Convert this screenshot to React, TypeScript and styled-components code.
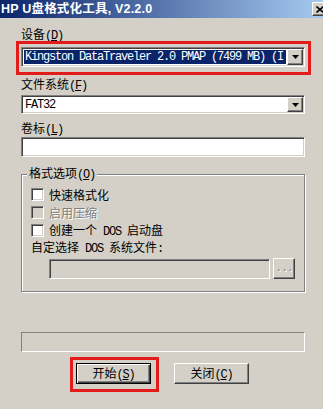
import React from "react";
import styled, { createGlobalStyle, css } from "styled-components";

const Global = createGlobalStyle`
  html, body { margin: 0; padding: 0; background: #D4D0C8; }
  body {
    font-family: "Noto Sans CJK SC", "Liberation Sans", sans-serif;
    font-size: 12px;
    color: #000;
  }
  * { box-sizing: border-box; }
`;

const sunken = css`
  border: 1px solid;
  border-color: #808080 #ffffff #ffffff #808080;
  box-shadow: inset 1px 1px 0 #404040, inset -1px -1px 0 #d4d0c8;
`;

const raised = css`
  border: 1px solid;
  border-color: #ffffff #404040 #404040 #ffffff;
  box-shadow: inset -1px -1px 0 #808080, inset 1px 1px 0 #d4d0c8;
  background: #d4d0c8;
`;

const Window = styled.div`
  width: 323px;
  height: 409px;
  background: #d4d0c8;
  overflow: hidden;
  display: flex;
  flex-direction: column;
`;

const TitleBar = styled.div`
  height: 18px;
  flex: none;
  display: flex;
  align-items: center;
  justify-content: space-between;
  background: linear-gradient(to right, #0a246a 0%, #a6caf0 100%);
  overflow: hidden;
`;

const TitleText = styled.div`
  color: #fff;
  font-family: "Liberation Sans", "Noto Sans CJK SC", sans-serif;
  font-weight: bold;
  font-size: 12.5px;
  letter-spacing: 0.2px;
  line-height: 18px;
  padding-left: 1px;
  white-space: nowrap;
`;

const CloseBox = styled.div`
  ${raised};
  width: 16px;
  height: 14px;
  margin-right: -5px;
  display: flex;
  align-items: center;
  justify-content: center;
  flex: none;
`;

const Body = styled.div`
  display: flex;
  flex-direction: column;
  padding: 0 18px 0 21px;
`;

const Label = styled.div<{ $top: number }>`
  margin-top: ${(p) => p.$top}px;
  height: 14px;
  line-height: 14px;
  white-space: nowrap;
`;

const Mono = styled.span`
  font-family: "Liberation Mono", monospace;
  font-size: 12px;
  letter-spacing: -1.2px;
  white-space: pre;
`;

const Highlight = styled.div`
  border: 3px solid #e31b1b;
  margin: 0 -6px 0 -5px;
  padding: 3px 3px 5px 2px;
`;

const Combo = styled.div<{ $h: number; $top?: number }>`
  ${sunken};
  margin-top: ${(p) => p.$top ?? 0}px;
  height: ${(p) => p.$h}px;
  background: #fff;
  display: flex;
  padding: 1px;
`;

const ComboField = styled.div<{ $selected?: boolean }>`
  flex: 1;
  min-width: 0;
  margin: 1px;
  padding-left: 1px;
  overflow: hidden;
  white-space: nowrap;
  line-height: 14px;
  display: flex;
  align-items: center;
  background: ${(p) => (p.$selected ? "#0a246a" : "#fff")};
  color: ${(p) => (p.$selected ? "#fff" : "#000")};
`;

const DropButton = styled.div`
  ${raised};
  width: 16px;
  flex: none;
  display: flex;
  align-items: center;
  justify-content: center;
`;

const TextInput = styled.div<{ $top: number }>`
  ${sunken};
  margin-top: ${(p) => p.$top}px;
  height: 20px;
  background: #fff;
`;

const Group = styled.fieldset`
  margin: 9px 0 0 0;
  min-width: 0;
  padding: 6px 9px 12px 9px;
  border: 1px solid #808080;
  box-shadow: 1px 1px 0 #fff, inset 1px 1px 0 #fff;
  display: flex;
  flex-direction: column;
`;

const Legend = styled.legend`
  margin-left: -4px;
  padding: 0 2px;
  line-height: 13px;
  background: #d4d0c8;
  white-space: nowrap;
`;

const CheckList = styled.div`
  display: flex;
  flex-direction: column;
  gap: 5px;
`;

const CheckRow = styled.label<{ $disabled?: boolean }>`
  display: flex;
  align-items: center;
  gap: 5px;
  height: 13px;
  white-space: nowrap;
  color: ${(p) => (p.$disabled ? "#808080" : "#000")};
  text-shadow: ${(p) => (p.$disabled ? "1px 1px 0 #fff" : "none")};
`;

const CheckText = styled.span`
  line-height: 13px;
`;

const CheckBox = styled.span<{ $disabled?: boolean }>`
  ${sunken};
  width: 13px;
  height: 13px;
  flex: none;
  background: ${(p) => (p.$disabled ? "#d4d0c8" : "#fff")};
`;

const SubLabel = styled.div`
  margin-top: 3px;
  height: 13px;
  line-height: 13px;
  white-space: nowrap;
`;

const FileRow = styled.div`
  display: flex;
  align-items: flex-end;
  gap: 3px;
  margin: 5px 0 0 18px;
`;

const FileInput = styled.div`
  ${sunken};
  flex: 1;
  height: 20px;
  background: #d4d0c8;
`;

const BrowseButton = styled.div`
  ${raised};
  width: 22px;
  height: 21px;
  flex: none;
  display: flex;
  align-items: flex-end;
  justify-content: center;
  padding-bottom: 4px;
  color: #808080;
  text-shadow: 1px 1px 0 #fff;
  font-family: "Liberation Mono", monospace;
  font-size: 11px;
  line-height: 11px;
  letter-spacing: -1px;
`;

const Progress = styled.div`
  margin-top: 40px;
  height: 20px;
  border: 1px solid;
  border-color: #808080 #ffffff #ffffff #808080;
`;

const ButtonRow = styled.div`
  margin-top: 5px;
  display: flex;
  align-items: flex-start;
  gap: 15px;
  padding-left: 49px;
`;

const ButtonHighlight = styled.div`
  border: 3px solid #e31b1b;
  padding: 3px 5px 5px 3px;
`;

const PushButton = styled.div<{ $default?: boolean; $top?: number; $w: number }>`
  width: ${(p) => p.$w}px;
  height: 21px;
  margin-top: ${(p) => p.$top ?? 0}px;
  display: flex;
  align-items: center;
  justify-content: center;
  white-space: nowrap;
  line-height: 14px;
  background: #d4d0c8;
  ${(p) =>
    p.$default
      ? css`
          border: 1px solid #000;
          box-shadow: inset 1px 1px 0 #fff, inset -1px -1px 0 #404040, inset -2px -2px 0 #808080;
        `
      : raised};
`;

const ButtonText = styled.span`
  line-height: 14px;
`;

const Arrow = () => (
  <svg width="7" height="4" viewBox="0 0 7 4">
    <path d="M0 0h7L3.5 4z" fill="#000" />
  </svg>
);

const XGlyph = () => (
  <svg width="8" height="7" viewBox="0 0 8 7">
    <path d="M0.5 0.5L7.5 6.5M7.5 0.5L0.5 6.5" stroke="#000" strokeWidth="1.6" />
  </svg>
);

const Key = ({ k }: { k: string }) => (
  <Mono>
    (<u>{k}</u>)
  </Mono>
);

export default function App() {
  return (
    <>
      <Global />
      <Window>
        <TitleBar>
          <TitleText>HP U盘格式化工具, V2.2.0</TitleText>
          <CloseBox>
            <XGlyph />
          </CloseBox>
        </TitleBar>
        <Body>
          <Label $top={9}>
            设备<Key k="D" />
          </Label>
          <Highlight>
            <Combo $h={20}>
              <ComboField $selected>
                <Mono>Kingston DataTraveler 2.0 PMAP (7499 MB) (I</Mono>
              </ComboField>
              <DropButton>
                <Arrow />
              </DropButton>
            </Combo>
          </Highlight>
          <Label $top={2}>
            文件系统<Key k="F" />
          </Label>
          <Combo $h={19} $top={4}>
            <ComboField>
              <Mono>FAT32</Mono>
            </ComboField>
            <DropButton>
              <Arrow />
            </DropButton>
          </Combo>
          <Label $top={7}>
            卷标<Key k="L" />
          </Label>
          <TextInput $top={2} />
          <Group>
            <Legend>
              格式选项<Key k="O" />
            </Legend>
            <CheckList>
              <CheckRow>
                <CheckBox />
                <CheckText>快速格式化</CheckText>
              </CheckRow>
              <CheckRow $disabled>
                <CheckBox $disabled />
                <CheckText>启用压缩</CheckText>
              </CheckRow>
              <CheckRow>
                <CheckBox />
                <CheckText>
                  创建一个<Mono> DOS </Mono>启动盘
                </CheckText>
              </CheckRow>
            </CheckList>
            <SubLabel>
              自定选择<Mono> DOS </Mono>系统文件<Mono>:</Mono>
            </SubLabel>
            <FileRow>
              <FileInput />
              <BrowseButton>...</BrowseButton>
            </FileRow>
          </Group>
          <Progress />
          <ButtonRow>
            <ButtonHighlight>
              <PushButton $default $w={75}>
                <ButtonText>
                  开始<Key k="S" />
                </ButtonText>
              </PushButton>
            </ButtonHighlight>
            <PushButton $w={75} $top={6}>
              <ButtonText>
                关闭<Key k="C" />
              </ButtonText>
            </PushButton>
          </ButtonRow>
        </Body>
      </Window>
    </>
  );
}
